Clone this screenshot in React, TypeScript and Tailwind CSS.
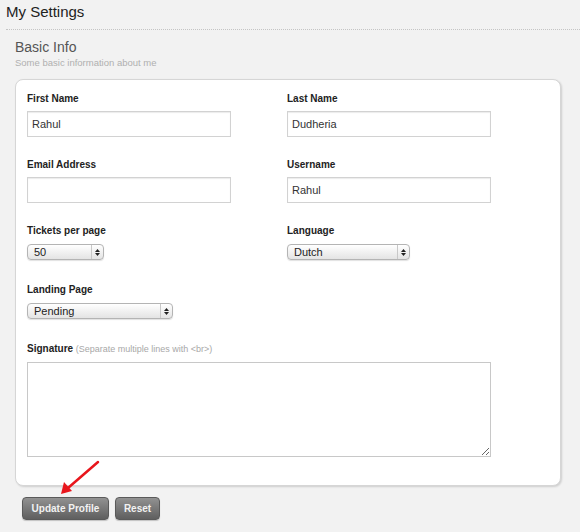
import React from 'react';

function Label({ children, hint }: { children: React.ReactNode; hint?: string }) {
    return (
        <div className="text-[10px] leading-[12px] font-bold text-[#222]">
            {children}
            {hint && <span className="font-normal text-[9px] text-[#a8a8a8]"> {hint}</span>}
        </div>
    );
}

function TextInput({ value }: { value?: string }) {
    return (
        <div className="mt-[6px] w-[204px] h-[26px] bg-white border border-[#d2d2d2] shadow-[inset_0_1px_1px_rgba(0,0,0,0.08)] flex items-center px-[4px] text-[11px] text-[#333]">
            {value}
        </div>
    );
}

function FakeSelect({ value, width }: { value: string; width: string }) {
    return (
        <div className={`mt-[7px] h-[16px] ${width} rounded-[4px] border border-[#b4b4b4] bg-gradient-to-b from-white to-[#e4e4e4] shadow-[0_1px_1px_rgba(0,0,0,0.12)] flex items-stretch text-[11px] text-[#222]`}>
            <span className="flex-1 pl-[6px] leading-[14px]">{value}</span>
            <span className="w-[12px] border-l border-[#c8c8c8] flex flex-col items-center justify-center gap-[1px]">
                <svg width="5" height="3" viewBox="0 0 5 3"><path d="M2.5 0L5 3H0z" fill="#222" /></svg>
                <svg width="5" height="3" viewBox="0 0 5 3"><path d="M0 0h5L2.5 3z" fill="#222" /></svg>
            </span>
        </div>
    );
}

function GrayButton({ children, width }: { children: React.ReactNode; width: string }) {
    return (
        <button className={`${width} h-[23px] rounded-[4px] border border-[#5a5a5a] bg-gradient-to-b from-[#929292] to-[#5f5f5f] text-[10px] font-bold text-[#f2f2f2] shadow-[0_1px_1px_rgba(0,0,0,0.2)]`}>
            {children}
        </button>
    );
}

export default function App() {
    return (
        <div className="relative w-[580px] h-[532px] overflow-hidden bg-[#f2f2f2] font-['Liberation_Sans',Arial,sans-serif]">
            {/* header */}
            <div className="ml-[6px] h-[30px] pt-[2px] border-b border-dotted border-[#c4c4c4]">
                <h1 className="text-[15px] leading-[19px] text-[#222]">My Settings</h1>
            </div>

            <div className="px-[15px] mt-[8px]">
                <h2 className="text-[14px] leading-[18px] text-[#555]">Basic Info</h2>
                <p className="mt-[1px] text-[9.5px] leading-[12px] text-[#b0b0b0]">Some basic information about me</p>
            </div>

            {/* card */}
            <div className="ml-[15px] mt-[10px] w-[546px] h-[407px] bg-white rounded-[8px] border border-[#d6d6d6] shadow-[1px_1px_2px_rgba(0,0,0,0.15)] pl-[11px] pt-[13px]">
                <div className="grid grid-cols-[260px_260px]">
                    <div>
                        <Label>First Name</Label>
                        <TextInput value="Rahul" />
                    </div>
                    <div>
                        <Label>Last Name</Label>
                        <TextInput value="Dudheria" />
                    </div>
                    <div className="mt-[22px]">
                        <Label>Email Address</Label>
                        <TextInput />
                    </div>
                    <div className="mt-[22px]">
                        <Label>Username</Label>
                        <TextInput value="Rahul" />
                    </div>
                    <div className="mt-[22px]">
                        <Label>Tickets per page</Label>
                        <FakeSelect value="50" width="w-[77px]" />
                    </div>
                    <div className="mt-[22px]">
                        <Label>Language</Label>
                        <FakeSelect value="Dutch" width="w-[123px]" />
                    </div>
                </div>

                <div className="mt-[24px]">
                    <Label>Landing Page</Label>
                    <FakeSelect value="Pending" width="w-[146px]" />
                </div>

                <div className="mt-[24px]">
                    <Label hint="(Separate multiple lines with <br>)">Signature</Label>
                    <textarea className="mt-[7px] block w-[464px] h-[95px] border border-[#c8c8c8] bg-white resize" />
                </div>
            </div>

            <div className="ml-[22px] mt-[11px] flex gap-[6px]">
                <GrayButton width="w-[87px]">Update Profile</GrayButton>
                <GrayButton width="w-[45px]">Reset</GrayButton>
            </div>

            {/* red annotation arrow */}
            <svg className="absolute left-0 top-0 pointer-events-none" width="580" height="532">
                <line x1="98" y1="462" x2="68" y2="488" stroke="#e8161c" strokeWidth="2.5" strokeLinecap="round" />
                <path d="M61 494 L64 482 L72 491 Z" fill="#e8161c" />
            </svg>
        </div>
    );
}
